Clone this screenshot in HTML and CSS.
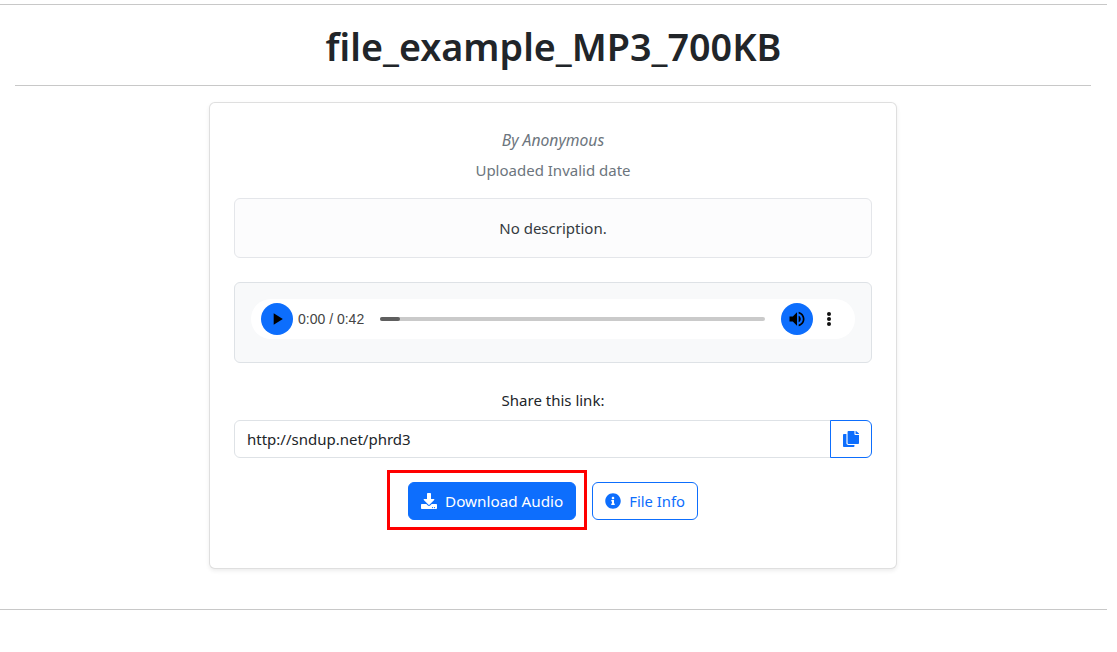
FILE: index.html
```html
<!DOCTYPE html>
<html>
<head>
    <meta charset="UTF-8">
    <title>file_example_MP3_700KB</title>
    <link rel="stylesheet" href="styles.css">
</head>
<body>
    <div class="page">
        <hr class="rule">
        <h1 class="title">file_example_MP3_700KB</h1>
        <hr class="rule title-rule">
        <div class="card">
            <p class="author">By Anonymous</p>
            <p class="uploaded">Uploaded Invalid date</p>
            <div class="description">No description.</div>
            <div class="player-well">
                <div class="player">
                    <div class="round-button">
                        <svg class="play-icon" viewBox="0 0 24 24"><path d="M8 5v14l11-7z"/></svg>
                    </div>
                    <span class="time">0:00 / 0:42</span>
                    <div class="track"><div class="track-done"></div></div>
                    <div class="round-button">
                        <svg class="volume-icon" viewBox="0 0 24 24"><path d="M3 9v6h4l5 5V4L7 9H3zm13.5 3c0-1.77-1.02-3.29-2.5-4.03v8.05c1.48-.73 2.5-2.25 2.5-4.02zM14 3.23v2.06c2.89.86 5 3.54 5 6.71s-2.11 5.85-5 6.71v2.06c4.01-.91 7-4.49 7-8.77s-2.99-7.86-7-8.77z"/></svg>
                    </div>
                    <div class="more-dots"><span></span><span></span><span></span></div>
                </div>
            </div>
            <div class="share-label">Share this link:</div>
            <div class="share-group">
                <input class="share-input" type="text" value="http://sndup.net/phrd3" readonly>
                <div class="copy-button">
                    <svg class="copy-icon" viewBox="0 0 448 512" preserveAspectRatio="none"><path d="M320 448v40c0 13.255-10.745 24-24 24H24c-13.255 0-24-10.745-24-24V120c0-13.255 10.745-24 24-24h72v296c0 30.879 25.121 56 56 56h168zm0-344V0H152c-13.255 0-24 10.745-24 24v368c0 13.255 10.745 24 24 24h272c13.255 0 24-10.745 24-24V128H344c-13.2 0-24-10.8-24-24zm120.971-31.029L375.029 7.029A24 24 0 0 0 358.059 0H352v96h96v-6.059a24 24 0 0 0-7.029-16.97z"/></svg>
                </div>
            </div>
            <div class="actions">
                <div class="download-wrap">
                    <a class="button button-primary">
                        <svg class="button-icon" viewBox="0 0 512 512"><path d="M216 0h80c13.3 0 24 10.7 24 24v168h87.7c17.8 0 26.7 21.5 14.1 34.1L269.7 378.3c-7.5 7.5-19.8 7.5-27.3 0L90.1 226.1c-12.6-12.6-3.7-34.1 14.1-34.1H192V24c0-13.3 10.7-24 24-24zm296 376v112c0 13.3-10.7 24-24 24H24c-13.3 0-24-10.7-24-24V376c0-13.3 10.7-24 24-24h146.7l49 49c20.1 20.1 52.5 20.1 72.6 0l49-49H488c13.3 0 24 10.7 24 24zm-124 88c0-11-9-20-20-20s-20 9-20 20 9 20 20 20 20-9 20-20zm64 0c0-11-9-20-20-20s-20 9-20 20 9 20 20 20 20-9 20-20z"/></svg>
                        Download Audio
                    </a>
                    <div class="highlight"></div>
                </div>
                <a class="button button-outline">
                    <svg class="button-icon" viewBox="0 0 512 512"><path d="M256 8C119.043 8 8 119.083 8 256c0 136.997 111.043 248 248 248s248-111.003 248-248C504 119.083 392.957 8 256 8zm0 110c23.196 0 42 18.804 42 42s-18.804 42-42 42-42-18.804-42-42 18.804-42 42-42zm56 254c0 6.627-5.373 12-12 12h-88c-6.627 0-12-5.373-12-12v-24c0-6.627 5.373-12 12-12h12v-64h-12c-6.627 0-12-5.373-12-12v-24c0-6.627 5.373-12 12-12h64c6.627 0 12 5.373 12 12v100h12c6.627 0 12 5.373 12 12v24z"/></svg>
                    File Info
                </a>
            </div>
        </div>
        <hr class="rule footer-rule">
    </div>
</body>
</html>
```

FILE: styles.css
```css
body {
    margin: 0;
    padding: 0;
    background-color: #fff;
    color: #212529;
    font-family: "Noto Sans", "Open Sans", sans-serif;
    font-size: 15px;
    line-height: 24px;
}
.page {
    width: 1107px;
    padding-top: 4px;
}
hr.rule {
    border: 0;
    border-top: 1px solid #c8c8c8;
    margin: 0;
}
hr.title-rule {
    margin: 0 16px 16px 15px;
}
hr.footer-rule {
    margin-top: 40px;
}
.title {
    font-size: 37.7px;
    font-weight: 600;
    line-height: 48px;
    margin: 0;
    padding: 18px 0 14px;
    text-align: center;
}
.card {
    background-color: #fff;
    border: 1px solid rgba(0, 0, 0, 0.125);
    border-radius: 6px;
    box-sizing: border-box;
    box-shadow: 0 2px 4px rgba(0, 0, 0, 0.075);
    height: 467px;
    margin: 0 0 0 209px;
    padding: 25px 24px 0;
    width: 688px;
}
.author,
.uploaded {
    color: #6c757d;
    margin: 0;
    text-align: center;
}
.author {
    font-size: 15.7px;
    font-style: italic;
    margin-bottom: 6px;
}
.uploaded {
    margin-bottom: 16px;
}
.description {
    background-color: #fcfcfd;
    border: 1px solid #e4e6ea;
    border-radius: 6px;
    box-sizing: border-box;
    color: #343a40;
    height: 60px;
    line-height: 58px;
    text-align: center;
}
.player-well {
    background-color: #f8f9fa;
    border: 1px solid #dee2e6;
    border-radius: 6px;
    box-sizing: border-box;
    height: 81px;
    margin-top: 24px;
    padding: 16px 16px 0;
}
.player {
    align-items: center;
    background-color: #fff;
    border-radius: 20px;
    display: flex;
    height: 40px;
    padding: 0 10px;
}
.round-button {
    align-items: center;
    background-color: #0d6efd;
    border-radius: 50%;
    display: flex;
    flex: none;
    height: 32px;
    justify-content: center;
    width: 32px;
}
.play-icon {
    height: 20px;
    width: 20px;
}
.volume-icon {
    height: 20px;
    width: 20px;
}
.time {
    color: #444;
    flex: none;
    font-family: "Liberation Sans", Arial, sans-serif;
    font-size: 14px;
    margin: 0 16px 0 5px;
}
.track {
    background-color: #cacaca;
    border-radius: 2px;
    flex: 1;
    height: 4px;
    margin-right: 16px;
}
.track-done {
    background-color: #5f5f5f;
    border-radius: 2px;
    height: 4px;
    width: 20px;
}
.more-dots {
    display: flex;
    flex-direction: column;
    flex: none;
    gap: 1px;
    margin: 0 14px;
}
.more-dots span {
    background-color: #111;
    border-radius: 50%;
    display: block;
    height: 4px;
    width: 4px;
}
.share-label {
    margin-top: 25px;
    text-align: center;
}
.share-group {
    display: flex;
    height: 38px;
    margin-top: 8px;
}
.share-input {
    border: 1px solid #dee2e6;
    border-radius: 6px 0 0 6px;
    box-sizing: border-box;
    color: #212529;
    flex: 1;
    font-family: inherit;
    font-size: 15px;
    min-width: 0;
    outline: none;
    padding: 0 12px;
}
.copy-button {
    align-items: center;
    border: 1px solid #0d6efd;
    border-radius: 0 6px 6px 0;
    box-sizing: border-box;
    display: flex;
    justify-content: center;
    margin-left: -1px;
    width: 42px;
}
.copy-icon {
    fill: #0d6efd;
    height: 16px;
    width: 16px;
}
.actions {
    display: flex;
    gap: 16px;
    justify-content: center;
    margin-top: 24px;
}
.download-wrap {
    position: relative;
}
.highlight {
    border: 3px solid #f00;
    bottom: -10px;
    left: -21px;
    pointer-events: none;
    position: absolute;
    right: -11px;
    top: -12px;
}
.button {
    align-items: center;
    border: 1px solid #0d6efd;
    border-radius: 6px;
    box-sizing: border-box;
    display: flex;
    gap: 8px;
    height: 38px;
    padding: 0 12px;
}
.button-primary {
    background-color: #0d6efd;
    color: #fff;
    font-size: 15.25px;
}
.button-outline {
    color: #0d6efd;
    font-size: 14.8px;
}
.button-icon {
    fill: currentColor;
    height: 16px;
    width: 16px;
}
```
